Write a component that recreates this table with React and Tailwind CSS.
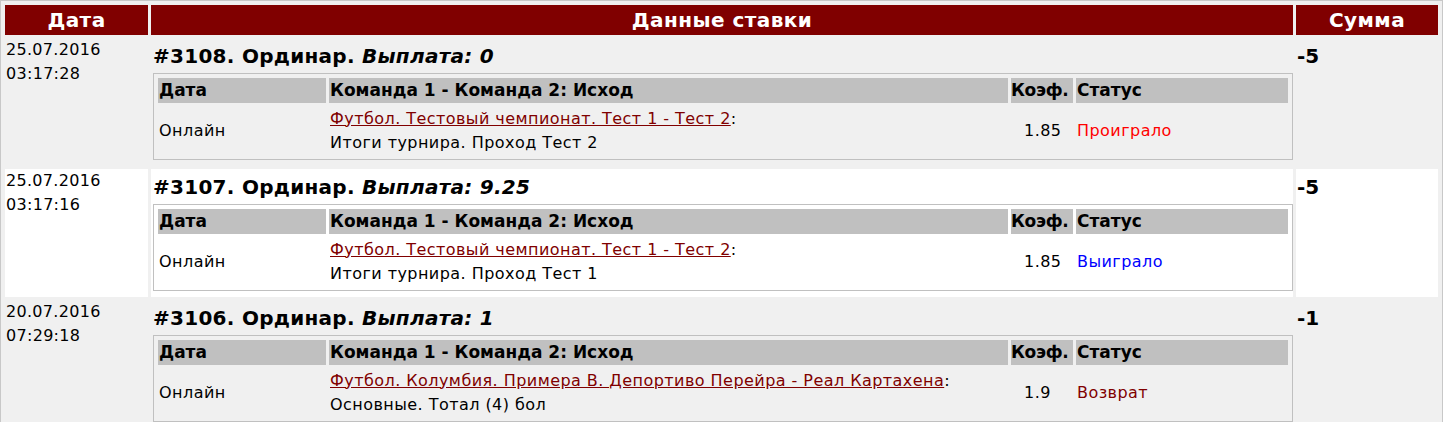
import React from "react";

const bets = [
  {
    date: "25.07.2016",
    time: "03:17:28",
    id: 3108,
    payout: "0",
    event: "Футбол. Тестовый чемпионат. Тест 1 - Тест 2",
    outcome: "Итоги турнира. Проход Тест 2",
    coef: "1.85",
    status: "Проиграло",
    statusColor: "text-[#ff0000]",
    sum: "-5",
    bg: "bg-[#f0f0f0]",
  },
  {
    date: "25.07.2016",
    time: "03:17:16",
    id: 3107,
    payout: "9.25",
    event: "Футбол. Тестовый чемпионат. Тест 1 - Тест 2",
    outcome: "Итоги турнира. Проход Тест 1",
    coef: "1.85",
    status: "Выиграло",
    statusColor: "text-[#0000ff]",
    sum: "-5",
    bg: "bg-white",
  },
  {
    date: "20.07.2016",
    time: "07:29:18",
    id: 3106,
    payout: "1",
    event: "Футбол. Колумбия. Примера B. Депортиво Перейра - Реал Картахена",
    outcome: "Основные. Тотал (4) бол",
    coef: "1.9",
    status: "Возврат",
    statusColor: "text-[#800000]",
    sum: "-1",
    bg: "bg-[#f0f0f0]",
  },
];

const BetDetails = ({ bet }) => {
  return (
    <table className="w-full table-fixed border-separate border-spacing-[3px] border border-[#c0c0c0] p-[1px] mb-[6px]">
      <thead>
        <tr className="text-[17px] font-bold leading-[25px] text-black">
          <th className="w-[168px] bg-[#c0c0c0] px-[1px] text-left">Дата</th>
          <th className="bg-[#c0c0c0] px-[1px] text-left">
            Команда 1 - Команда 2: Исход
          </th>
          <th className="w-[62px] bg-[#c0c0c0] px-0 text-left tracking-[-0.3px]">
            Коэф.
          </th>
          <th className="w-[212px] bg-[#c0c0c0] px-[1px] text-left">Статус</th>
        </tr>
      </thead>
      <tbody>
        <tr className="text-[16px] leading-[24px] tracking-[0.45px] h-[49px]">
          <td className="px-[1px]">Онлайн</td>
          <td className="px-[1px]">
            <a href="#" className="text-[#800000] underline">
              {bet.event}
            </a>
            :
            <br />
            {bet.outcome}
          </td>
          <td className="pl-[13px]">{bet.coef}</td>
          <td className={`px-[1px] ${bet.statusColor}`}>{bet.status}</td>
        </tr>
      </tbody>
    </table>
  );
};

export default function App() {
  return (
    <div className="min-h-screen bg-[#f0f0f0] font-['DejaVu_Sans',sans-serif] text-black">
      <table className="w-full table-fixed border-separate border-spacing-[3px] border border-[#c8c8c8] p-[1px]">
        <thead>
          <tr className="h-[30px] text-[20px] font-bold tracking-[0.45px] text-white">
            <th className="w-[143px] bg-[#800000] p-0">Дата</th>
            <th className="bg-[#800000] p-0">Данные ставки</th>
            <th className="w-[142px] bg-[#800000] p-0">Сумма</th>
          </tr>
        </thead>
        <tbody>
          {bets.map((bet) => (
            <tr key={bet.id}>
              <td className={`${bet.bg} align-top px-[1px] text-[16px] leading-[24px] tracking-[0.3px]`}>
                {bet.date}
                <br />
                {bet.time}
              </td>
              <td className={`${bet.bg} align-top pl-[2px] pr-0`}>
                <div className="h-[35px] text-[20px] font-bold leading-[36px] tracking-[0.27px]">
                  #{bet.id}. Ординар. <i>Выплата: {bet.payout}</i>
                </div>
                <BetDetails bet={bet} />
              </td>
              <td className={`${bet.bg} align-top px-[1px] text-[20px] font-bold leading-[36px]`}>
                {bet.sum}
              </td>
            </tr>
          ))}
        </tbody>
      </table>
    </div>
  );
}
